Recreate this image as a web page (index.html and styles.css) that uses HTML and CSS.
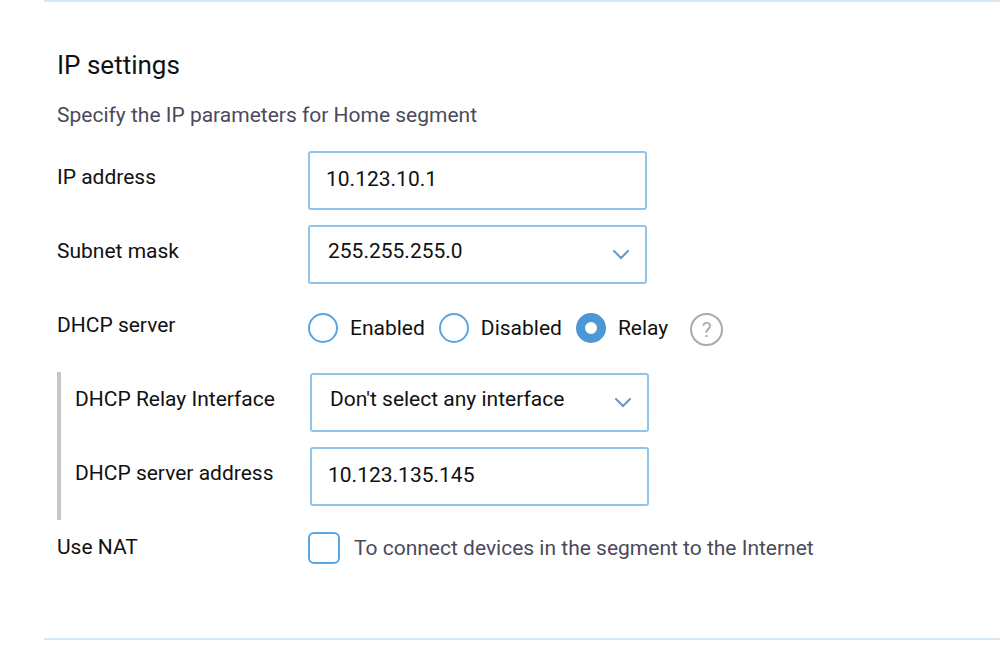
FILE: index.html
```html
<!DOCTYPE html>
<html lang="en">
<head>
<meta charset="utf-8">
<title>IP settings</title>
<link rel="stylesheet" href="styles.css">
</head>
<body>
<main class="page">
  <form class="section">
    <h2 class="title">IP settings</h2>
    <p class="hint">Specify the IP parameters for Home segment</p>

    <div class="row">
      <label class="label" for="ip">IP address</label>
      <input class="field" id="ip" type="text" value="10.123.10.1">
    </div>

    <div class="row">
      <label class="label" for="mask">Subnet mask</label>
      <div class="select-wrap">
        <select class="field select" id="mask"><option>255.255.255.0</option></select>
        <svg class="chevron" viewBox="0 0 18 10" aria-hidden="true"><path d="M2 1l7 7 7-7"/></svg>
      </div>
    </div>

    <div class="row" role="radiogroup" aria-labelledby="dhcp">
      <span class="label" id="dhcp">DHCP server</span>
      <div class="choices">
        <label class="choice"><input class="radio" type="radio" name="dhcp">Enabled</label>
        <label class="choice"><input class="radio" type="radio" name="dhcp">Disabled</label>
        <label class="choice"><input class="radio" type="radio" name="dhcp" checked>Relay</label>
        <button class="help" type="button" aria-label="Help">?</button>
      </div>
    </div>

    <div class="group">
      <div class="row">
        <label class="label" for="relay">DHCP Relay Interface</label>
        <div class="select-wrap">
          <select class="field select" id="relay"><option>Don't select any interface</option></select>
          <svg class="chevron" viewBox="0 0 18 10" aria-hidden="true"><path d="M2 1l7 7 7-7"/></svg>
        </div>
      </div>
      <div class="row">
        <label class="label" for="server">DHCP server address</label>
        <input class="field" id="server" type="text" value="10.123.135.145">
      </div>
    </div>

    <div class="row">
      <span class="label" id="nat">Use NAT</span>
      <label class="choice nat"><input class="check" type="checkbox" aria-describedby="nat">To connect devices in the segment to the Internet</label>
    </div>
  </form>
</main>
</body>
</html>
```

FILE: styles.css
```css
* { box-sizing: border-box; }

body {
  margin: 0;
  background: #fff;
  color: #111;
  font: 21px/28px Roboto, "Liberation Sans", sans-serif;
}

.page { padding-left: 44px; }

.section {
  border-top: 2px solid #d8eaf5;
  border-bottom: 2px solid #d8eaf5;
  padding: 44px 13px;
}

.title {
  margin: 0;
  font-size: 26px;
  font-weight: 400;
  line-height: 38px;
}

.hint {
  margin: 16px 0 20px;
  line-height: 30px;
  color: #4b4a5a;
}

.row {
  display: grid;
  grid-template-columns: 251px minmax(0, 339px);
  align-items: start;
  min-height: 74px;
  padding-top: 1px;
}

.group {
  border-left: 4px solid #c5c6c8;
  padding-left: 14px;
}

.group .row { grid-template-columns: 235px minmax(0, 339px); }

.label { padding-top: 12px; }

.field {
  display: block;
  width: 100%;
  height: 59px;
  border: 2px solid #92c3e8;
  border-radius: 3px;
  padding: 0 16px 4px;
  background: #fff;
  color: #111;
  font: inherit;
}

.select-wrap { position: relative; }

.select {
  appearance: none;
  padding: 0 48px 8px 18px;
}

.chevron {
  position: absolute;
  top: 25px;
  right: 17px;
  width: 18px;
  height: 10px;
  fill: none;
  stroke: #6696cb;
  stroke-width: 2;
  stroke-linecap: round;
  pointer-events: none;
}

.choices {
  display: flex;
  align-items: flex-start;
  gap: 14px;
  padding-top: 14px;
}

.choice {
  display: flex;
  align-items: center;
  gap: 12px;
  white-space: nowrap;
}

.choices .choice { line-height: 26px; }

.radio,
.check {
  appearance: none;
  flex: none;
  width: 30px;
  height: 30px;
  margin: 0;
  border: 2px solid #5aa4df;
  border-radius: 50%;
  background: #fff;
}

.radio:checked { border: 9px solid #4c97d5; }

.check {
  width: 32px;
  height: 32px;
  border-radius: 6px;
}

.nat {
  gap: 14px;
  padding-top: 11px;
  color: #4b4a5a;
}

.help {
  flex: none;
  width: 33px;
  height: 33px;
  margin-left: 8px;
  border: 2px solid #aaa;
  border-radius: 50%;
  padding: 0;
  background: none;
  color: #aaa;
  font: 21px/28px Roboto, "Liberation Sans", sans-serif;
}
```
